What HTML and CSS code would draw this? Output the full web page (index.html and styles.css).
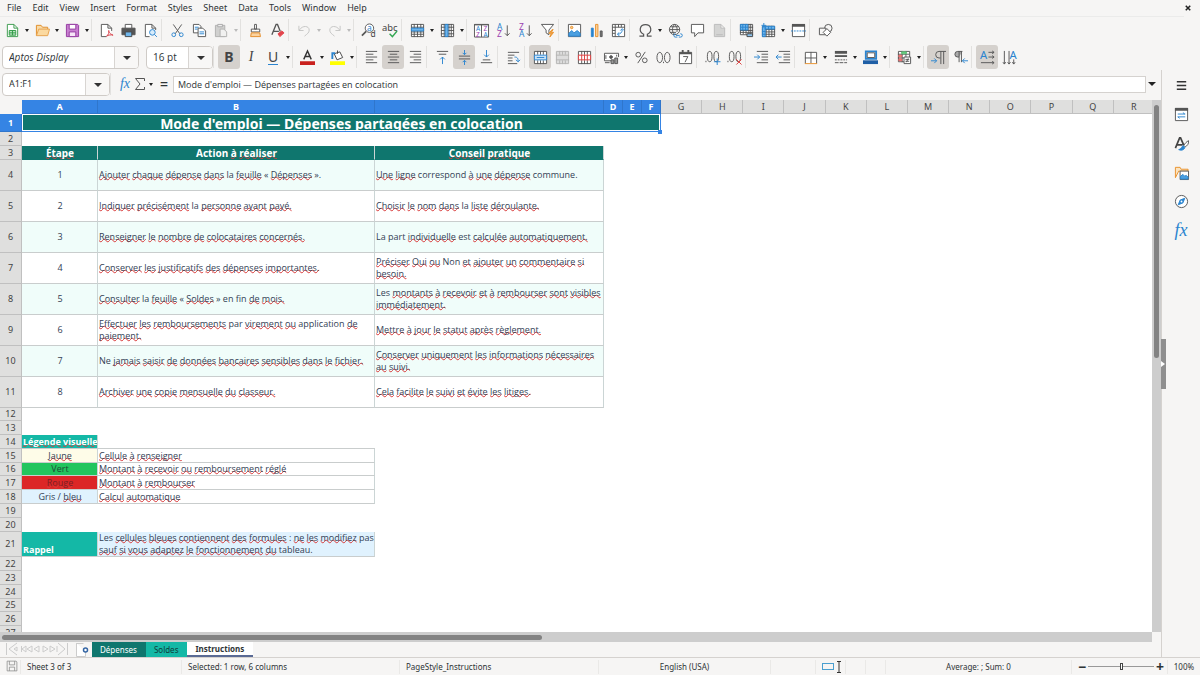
FILE: index.html
```html
<!DOCTYPE html>
<html lang="fr">
<head>
<meta charset="utf-8">
<title>Dépenses partagées en colocation</title>
<link rel="stylesheet" href="styles.css">
</head>
<body>
<header class="menubar">
  <nav class="menus" lang="en">
    <button>File</button><button>Edit</button><button>View</button><button>Insert</button><button>Format</button><button>Styles</button><button>Sheet</button><button>Data</button><button>Tools</button><button>Window</button><button>Help</button>
  </nav>
  <button class="close" aria-label="Close"><svg viewBox="0 0 8 8" width="6" height="6"><path d="M1 1l6 6M7 1l-6 6" stroke="#222" stroke-width="2"/></svg></button>
</header>

<div class="toolbar" role="toolbar" aria-label="Standard">
  <button class="tool" aria-label="New"><svg viewBox="0 0 16 16"><path d="M2.500 1.500h7l4 4v9h-11z" fill="#fff" stroke="#3a9a4c"/><path d="M9.500 1.500v4h4" stroke="#3a9a4c"/><path d="M4.500 8h7v5h-7zM4.500 10.500h7M8 8v5" stroke="#2f9a45" fill="#b8e3bf"/></svg></button><button class="drop" aria-label="New options"></button>
  <button class="tool" aria-label="Open"><svg viewBox="0 0 16 16"><path d="M1.500 13.500v-11h5l1.500 2h5.500v3" fill="#f8dba8" stroke="#e08c26"/><path d="M1.500 13.500l2.500-7h11.500l-2 7z" fill="#fbd9a0" stroke="#e5a04c"/></svg></button><button class="drop" aria-label="Open recent"></button>
  <button class="tool" aria-label="Save"><svg viewBox="0 0 16 16"><path d="M1.500 1.500h12l1 1v12h-13z" fill="#c77fd0" stroke="#93389f"/><path d="M4.500 1.500h7v5h-7z" fill="#fff" stroke="#93389f"/><path d="M4.500 14.500v-5h7v5z" fill="#f7e6f8" stroke="#93389f"/></svg></button><button class="drop" aria-label="Save options"></button>
  <i class="sep"></i>
  <button class="tool" aria-label="Export as PDF"><svg viewBox="0 0 16 16"><path d="M8 14.500H2.500v-13h7l4 4v3M9.500 1.500v4h4" fill="#fff"/><path d="M8 14c2-1 3-4 2.500-6-.8 0-.2 3 4.500 5-2-.7-5-.2-7 1z" stroke="#d9404a"/></svg></button>
  <button class="tool" aria-label="Print"><svg viewBox="0 0 16 16"><path d="M4.500 5.500v-4h7v4" fill="#fff"/><path d="M1 5.500h14v7H1z" fill="#555"/><path d="M4.500 9.500h7v5h-7z" fill="#6fb5ea" stroke="#444"/></svg></button>
  <button class="tool" aria-label="Print preview"><svg viewBox="0 0 16 16"><path d="M7 14.500H2.500v-13h7l4 4v2M9.500 1.500v4h4" fill="#fff"/><circle cx="10" cy="10" r="3" stroke="#2b84cf" fill="#d8ecfb"/><path d="M12.300 12.300l2.500 2.500" stroke="#2b84cf"/></svg></button>
  <i class="sep"></i>
  <button class="tool" aria-label="Cut"><svg viewBox="0 0 16 16"><path d="M3.500 1.500l7 10M12.500 1.500l-7 10"/><circle cx="4" cy="12.500" r="2" stroke="#2b84cf"/><circle cx="12" cy="12.500" r="2" stroke="#2b84cf"/></svg></button>
  <button class="tool" aria-label="Copy"><svg viewBox="0 0 16 16"><path d="M1.500 1.500h6l2 2v7h-8z" fill="#fff"/><path d="M3 4.500h4M3 6.500h3" stroke="#2b84cf"/><path d="M6.500 5.500h5l3 3v6h-8z" fill="#fff"/><path d="M8 9.500h5M8 11.500h5" stroke="#2b84cf"/></svg></button>
  <button class="tool" aria-label="Paste" disabled><svg viewBox="0 0 16 16"><path d="M1.500 2.500h10v12h-10z" fill="#d0d0cf" stroke="#b0b0af"/><path d="M4 1.500h5v2.500H4z" fill="#eee" stroke="#aaa"/><path d="M6.500 6.500h4l3 3v5h-7z" fill="#f1f1f0" stroke="#b0b0af"/></svg></button><button class="drop off" aria-label="Paste options" disabled></button>
  <i class="sep"></i>
  <button class="tool" aria-label="Clone formatting"><svg viewBox="0 0 16 16"><path d="M7 1.500h2v5H7zM3.500 6.500h9v3h-9z" fill="#fff"/><path d="M3.500 10.500h9l.8 4H2.800z" fill="#fbd3a0" stroke="#e38c28"/></svg></button>
  <button class="tool" aria-label="Clear formatting"><svg viewBox="0 0 16 16"><path d="M2 12.500L6.500 1.500h1.500L11 9M3.500 9h6" stroke-width="1.400"/><path d="M8.500 11.500l4-3 2.500 2-4.500 4z" fill="#e2434b" stroke="#e2434b"/></svg></button>
  <i class="sep"></i>
  <button class="tool" aria-label="Undo" disabled><svg viewBox="0 0 16 16"><path d="M2 3v5h5M2.500 7.500C6 2 13 3 13 7.500c0 3-2 4-5 6.500" stroke="#c4c4c3"/></svg></button><button class="drop off" aria-label="Undo list" disabled></button>
  <button class="tool" aria-label="Redo" disabled><svg viewBox="0 0 16 16"><path d="M14 3v5H9M13.500 7.500C10 2 3 3 3 7.500c0 3 2 4 5 6.500" stroke="#c4c4c3"/></svg></button><button class="drop off" aria-label="Redo list" disabled></button>
  <i class="sep"></i>
  <button class="tool" aria-label="Find and replace"><svg viewBox="0 0 16 16"><circle cx="9" cy="5.500" r="4.500" fill="#fff"/><path d="M5.500 9L1 13.500" stroke-width="1.800"/><text x="6.500" y="8" class="g blue t8">a</text><text x="10" y="15" class="g t8">d</text></svg></button>
  <button class="tool" aria-label="Spelling"><svg viewBox="0 0 16 16"><text x="-1" y="8" class="g t10">abc</text><path d="M7 11.500l3 3 5-6" stroke="#35a854" stroke-width="1.500"/></svg></button>
  <i class="sep"></i>
  <button class="tool" aria-label="Row"><svg viewBox="0 0 16 16"><path d="M1.500 1.500h13v13h-13zM1.500 4.500h13M1.500 9.500h13M1.500 12h13M4.500 1v14M8 1v14M11.500 1v14" fill="#fff"/><path d="M1.500 5.500h13v3h-13z" fill="#6db4ea" stroke="#2b84cf"/></svg></button><button class="drop" aria-label="Row options"></button>
  <button class="tool" aria-label="Column"><svg viewBox="0 0 16 16"><path d="M1.500 1.500h13v13h-13zM1 4.500h14M1 8h14M1 11.500h14M4.500 1v14M9.500 1v14M12 1v14" fill="#fff"/><path d="M5.500 1.500h3v13h-3z" fill="#6db4ea" stroke="#2b84cf"/></svg></button><button class="drop" aria-label="Column options"></button>
  <i class="sep"></i>
  <button class="tool" aria-label="Sort"><svg viewBox="0 0 16 16"><path d="M.5 1.500h15v13.500H.500zM8 2v13M0 2h16" fill="#fff"/><text x="2" y="8.500" class="g blue t6">A</text><text x="2" y="14.500" class="g purple t6">Z</text><text x="10" y="8.500" class="g purple t6">Z</text><text x="10" y="14.500" class="g blue t6">A</text></svg></button>
  <button class="tool" aria-label="Sort ascending"><svg viewBox="0 0 16 16"><text x="1" y="7" class="g blue t8">A</text><text x="1" y="15" class="g purple t8">Z</text><path d="M12 2.500v11M9.500 11l2.500 2.500 2.500-2.500"/></svg></button>
  <button class="tool" aria-label="Sort descending"><svg viewBox="0 0 16 16"><text x="1" y="7" class="g purple t8">Z</text><text x="1" y="15" class="g blue t8">A</text><path d="M12 2.500v11M9.500 11l2.500 2.500 2.500-2.500"/></svg></button>
  <button class="tool" aria-label="AutoFilter"><svg viewBox="0 0 16 16"><path d="M1.500 1.500h13l-5 6v5l-3-2v-3z" fill="#fff"/><path d="M13 7l-3.500 4h2.500l-1.500 4 4-5h-2.500l2-3z" fill="#f4a94d" stroke="#e9912c"/></svg></button>
  <i class="sep"></i>
  <button class="tool" aria-label="Image"><svg viewBox="0 0 16 16"><path d="M1.500 1.500h13v13h-13z" fill="#fff"/><path d="M2 14v-3l3-3 2.500 2.500L11 8l3 3v3z" fill="#4a9fe0" stroke="#2b84cf"/><circle cx="5" cy="4.800" r="1.300" stroke="#e9912c" fill="#f9c98a"/></svg></button>
  <button class="tool" aria-label="Chart"><svg viewBox="0 0 16 16"><path d="M2.500 5.500h2v9h-2z" stroke="#2b84cf" fill="#2b84cf"/><path d="M7 1.500h2.500v13H7z" fill="#fbd3a0" stroke="#e9912c"/><path d="M12 8.500h2v6h-2z" fill="#777"/></svg></button>
  <button class="tool" aria-label="Pivot table"><svg viewBox="0 0 16 16"><path d="M1.500 1.500h13v13h-13zM1.500 4.500h13M4.500 1.500v13M8 1.500v3M11 1.500v3M1.500 8h3M1.500 11h3" fill="#fff"/><path d="M7 12c3 0 5-2 5-5M10 8l2-2 2 2M8.500 10L7 12l2 2" stroke="#2b84cf"/></svg></button>
  <i class="sep"></i>
  <button class="tool" aria-label="Special character"><svg viewBox="0 0 16 16"><path d="M1.500 14h4.500v-2C0 9 2 1.800 8 1.800S16 9 10 12v2h4.500" stroke-width="1.300"/></svg></button><button class="drop" aria-label="Recent characters"></button>
  <button class="tool" aria-label="Hyperlink"><svg viewBox="0 0 16 16"><circle cx="7" cy="7" r="5.500"/><path d="M1.500 7h11M2.500 4h9M2.500 10h6M7 1.500C4 5 4 9 7 12.500M7 1.500c3 3 3 5 2.500 8"/><path d="M8 11.500h-.5a1.800 1.800 0 000 3.500H10M13 11.500h.5a1.500 1.500 0 010 3.500h-2M8.500 13.200h4" stroke="#2b84cf"/></svg></button>
  <button class="tool" aria-label="Comment"><svg viewBox="0 0 16 16"><path d="M1.500 1.500h13v9h-6l-3.500 4v-4H1.500z" fill="#fff"/></svg></button>
  <button class="tool" aria-label="Headers and footers" disabled><svg viewBox="0 0 16 16"><path d="M2.500 1.500h7l4 4v9h-11zM9.500 1.500v4h4M4.500 12.500h7" fill="#d4d4d3" stroke="#bbb"/></svg></button>
  <i class="sep"></i>
  <button class="tool" aria-label="Print area"><svg viewBox="0 0 16 16"><path d="M1.500 1.500h13v11h-13zM1 8h14M1 10h14M10.500 1v11M12.500 1v11M4.500 1v11M7.500 1v11M10 4.500h5" fill="#fff"/><path d="M1.500 1.500h8v6h-8zM4 1.500v6M7 1.500v6M1.500 4.500h8" fill="#6db4ea" stroke="#2b84cf"/><path d="M8.500 11.500h6v3h-6z" fill="#8cc4ee" stroke="#444"/></svg></button>
  <button class="tool" aria-label="Freeze rows and columns"><svg viewBox="0 0 16 16"><path d="M1.500 3.500h13v11h-13zM1 7h14M1 9.500h14M1 12h14M5.500 3v12M8.500 3v12M11.500 3v12" fill="#fff"/><path d="M1.500 3.500h3v11h-3zM4.500 3.500h10v3h-10zM8 3.500v3M11 3.500v3M1.500 9h3M1.500 12h3" fill="#6db4ea" stroke="#2b84cf"/><path d="M3 0v5M.5 2.500h5" stroke="#2b84cf"/></svg></button><button class="drop" aria-label="Freeze options"></button>
  <button class="tool" aria-label="Split window"><svg viewBox="0 0 16 16"><path d="M1.500 2.500h13v12h-13z" fill="#fff"/><path d="M1 2.500h14" stroke-width="3"/><path d="M0 8.500h16" stroke="#2b84cf" stroke-dasharray="2 1"/></svg></button>
  <i class="sep"></i>
  <button class="tool" aria-label="Draw functions"><svg viewBox="0 0 16 16"><circle cx="11" cy="5.500" r="4"/><path d="M1.500 5.500h7v7h-7z" fill="#f6f5f4"/><path d="M9.500 6l4 4-4 4-4-4z" fill="#fff"/></svg></button>
</div>

<div class="toolbar formatting" role="toolbar" aria-label="Formatting">
  <span class="combo font"><select aria-label="Font name"><option>Aptos Display</option></select></span>
  <span class="combo size"><select aria-label="Font size"><option>16 pt</option></select></span>
  <i class="sep"></i>
  <button class="tool on" aria-label="Bold"><b class="big">B</b></button>
  <button class="tool" aria-label="Italic"><em class="big serif">I</em></button>
  <button class="tool" aria-label="Underline"><span class="big under">U</span></button><button class="drop" aria-label="Underline options"></button>
  <i class="sep"></i>
  <button class="tool" aria-label="Font color"><svg viewBox="0 0 16 16"><path d="M4 10L8 1l4 9M5.500 7h5" stroke-width="1.500" stroke="#333"/><path d="M0 12h16v4H0z" fill="#c9211e" stroke="none"/></svg></button><button class="drop" aria-label="Font color options"></button>
  <button class="tool" aria-label="Background color"><svg viewBox="0 0 16 16"><path d="M4.500 4l6-2 3 6-6 2.500zM8 4V.500" fill="#fff" stroke="#444"/><path d="M2.500 9.500V3.500h3" stroke="#2b84cf" stroke-width="2"/><path d="M0 12h16v4H0z" fill="#ffff00" stroke="none"/></svg></button><button class="drop" aria-label="Background color options"></button>
  <i class="sep"></i>
  <button class="tool" aria-label="Align left"><svg viewBox="0 0 16 16"><path d="M2 1.500h12M2 4.500h8M2 7.500h12M2 10.500h8M2 13.500h12"/></svg></button>
  <button class="tool on" aria-label="Center"><svg viewBox="0 0 16 16"><path d="M2 1.500h12M4 4.500h8M2 7.500h12M4 10.500h8M2 13.500h12"/></svg></button>
  <button class="tool" aria-label="Align right"><svg viewBox="0 0 16 16"><path d="M2 1.500h12M6 4.500h8M2 7.500h12M6 10.500h8M2 13.500h12"/></svg></button>
  <i class="sep"></i>
  <button class="tool" aria-label="Align top"><svg viewBox="0 0 16 16"><path d="M2 1.500h12M4 4.500h8"/><path d="M8 15V7.500M5.500 10L8 7.500l2.500 2.500" stroke="#2b84cf"/></svg></button>
  <button class="tool on" aria-label="Center vertically"><svg viewBox="0 0 16 16"><path d="M2 6.500h12M2 9.500h12"/><path d="M8 0v5M6 3l2 2 2-2M8 16v-5M6 13l2-2 2 2" stroke="#2b84cf"/></svg></button>
  <button class="tool" aria-label="Align bottom"><svg viewBox="0 0 16 16"><path d="M4 10.500h8M2 13.500h12"/><path d="M8 0v7.500M5.500 5L8 7.500 10.500 5" stroke="#2b84cf"/></svg></button>
  <i class="sep"></i>
  <button class="tool" aria-label="Wrap text"><svg viewBox="0 0 16 16"><path d="M2 2.500h12M2 5.500h7M2 8.500h5M2 11.500h5M2 14.500h10"/><path d="M9 7.500c3 0 4 1 4 5M10.500 10.500l2.500 2 2-2" stroke="#2b84cf"/></svg></button>
  <i class="sep"></i>
  <button class="tool on" aria-label="Merge and center"><svg viewBox="0 0 16 16"><path d="M1.500 1.500h13v13h-13zM5 1v4M8 1v4M11 1v4M5 11v4M8 11v4M11 11v4" fill="#fff"/><path d="M1.500 5.500h13v5h-13zM4 8h8" stroke="#2b84cf" fill="#c8e2f8"/></svg></button>
  <button class="tool" aria-label="Merge cells" disabled><svg viewBox="0 0 16 16"><path d="M1.500 1.500h13v13h-13zM5 1v4M8 1v4M11 1v4M5 11v4M8 11v4M11 11v4M1 5.500h14M1 10.500h14" fill="#ddd" stroke="#b4b4b3"/></svg></button>
  <button class="tool" aria-label="Unmerge cells"><svg viewBox="0 0 16 16"><path d="M1.500 1.500h13v13h-13zM5 1v4M8 1v4M11 1v4M5 11v4M8 11v4M11 11v4" fill="#fff"/><path d="M1.500 5.500h13v5h-13zM5 5v6M8 5v6M11 5v6" stroke="#dc3b3b" fill="#fff"/></svg></button>
  <i class="sep"></i>
  <button class="tool" aria-label="Currency"><svg viewBox="0 0 16 16"><path d="M8 11.500H.5v-8h15v4" fill="#fff"/><circle cx="7.500" cy="7.500" r="1.500" fill="#555"/><path d="M1 13.500h5M2 5.500v4M13.500 5v2"/><path d="M7.500 10.500h3v4h-3zM11.500 8.500h3v6h-3z" fill="#999"/></svg></button><button class="drop" aria-label="Currency options"></button>
  <button class="tool" aria-label="Percent"><svg viewBox="0 0 16 16"><circle cx="4.500" cy="5" r="2.500"/><circle cx="11.500" cy="11" r="2.500"/><path d="M12 2L4 14"/></svg></button>
  <button class="tool" aria-label="Number"><svg viewBox="0 0 16 16"><ellipse cx="4" cy="8" rx="3" ry="5.500"/><ellipse cx="12" cy="8" rx="3" ry="5.500"/><path d="M8 12.500v1.500"/></svg></button>
  <button class="tool" aria-label="Date"><svg viewBox="0 0 16 16"><path d="M1.500 2.500h13v12h-13z" fill="#fff"/><path d="M1.500 3.500h13M5 0v3M11 0v3" stroke-width="2"/><path d="M5.500 7h5L7.500 13"/></svg></button>
  <i class="sep"></i>
  <button class="tool" aria-label="Add decimal place"><svg viewBox="0 0 16 16"><ellipse cx="5" cy="7" rx="2.500" ry="5.500"/><ellipse cx="12" cy="7" rx="2.500" ry="5.500"/><path d="M1 11.500v1.500"/><path d="M13 9v7M9.500 12.500h7" stroke="#2b84cf"/></svg></button>
  <button class="tool" aria-label="Delete decimal place"><svg viewBox="0 0 16 16"><ellipse cx="5" cy="7" rx="2.500" ry="5.500"/><ellipse cx="12" cy="7" rx="2.500" ry="5.500"/><path d="M1 11.500v1.500"/><path d="M10 10l5.500 5.500M15.500 10L10 15.500" stroke="#dc3b3b"/></svg></button>
  <i class="sep"></i>
  <button class="tool" aria-label="Increase indent"><svg viewBox="0 0 16 16"><path d="M3 1.500h12M8 4.500h7M8 7.500h7M8 10.500h7M3 13.500h12"/><path d="M0 7.500h6M3.500 5L6 7.500 3.500 10" stroke="#2b84cf"/></svg></button>
  <button class="tool" aria-label="Decrease indent"><svg viewBox="0 0 16 16"><path d="M3 1.500h12M8 4.500h7M8 7.500h7M8 10.500h7M3 13.500h12"/><path d="M0 7.500h6M2.500 5L0 7.500 2.500 10" stroke="#2b84cf"/></svg></button>
  <i class="sep"></i>
  <button class="tool" aria-label="Borders"><svg viewBox="0 0 16 16"><path d="M2.500 14.500v-12h12v12M8.500 2v12M2 8.500h12" fill="#fff"/><path d="M2 14.500h13" stroke="#e9912c"/></svg></button><button class="drop" aria-label="Border options"></button>
  <button class="tool" aria-label="Border style"><svg viewBox="0 0 16 16"><path d="M2 2.500h13" stroke-width="3"/><path d="M2 6.500h13" stroke-width="2"/><path d="M2 10.500h13" stroke-dasharray="2 1"/><path d="M2 13.500h13" stroke-dasharray="4 1"/></svg></button><button class="drop" aria-label="Border style options"></button>
  <button class="tool" aria-label="Border color"><svg viewBox="0 0 16 16"><path d="M3 1.500h11v8H3z" fill="#fff" stroke="#2b84cf" stroke-width="2"/><path d="M4.500 3h8v5h-8z"/><path d="M0 11h16v4H0z" fill="#1f5fa6" stroke="none"/></svg></button><button class="drop" aria-label="Border color options"></button>
  <i class="sep"></i>
  <button class="tool" aria-label="Conditional formatting"><svg viewBox="0 0 16 16"><path d="M1.500 1.500h12v11h-12zM1 4.500h12M1 8.500h12M5.500 1v12M9.500 1v12" fill="#fff"/><path d="M5 2h5v2H5z" fill="#62c77a" stroke="#62c77a"/><path d="M2 5.500h3v2H2zM2 9.500h3v2H2z" fill="#f28a8a" stroke="#e06060"/><path d="M7.500 7.500h7v7h-7z" fill="#fff"/><path d="M9 10h4M9 12h4M12 9l-2 4"/></svg></button><button class="drop" aria-label="Conditional formatting options"></button>
  <i class="sep"></i>
  <button class="tool on" aria-label="Left to right"><svg viewBox="0 0 16 16"><path d="M16 1.500H8.500a3.500 3.500 0 000 7H10M10.500 1.500V15M13.500 1.500V15"/><path d="M0 11.500h6M3.500 9L6 11.500 3.500 14" stroke="#2b84cf"/></svg></button>
  <button class="tool" aria-label="Right to left"><svg viewBox="0 0 16 16"><path d="M10 1.500H5a3 3 0 000 6h1.500M6.500 1.500V13M9 1.500V13" fill="#aaa"/><path d="M10 11.500h6M12.500 9L10 11.500l2.500 2.500" stroke="#2b84cf"/></svg></button>
  <i class="sep"></i>
  <button class="tool on" aria-label="Horizontal text"><svg viewBox="0 0 16 16"><text x="0" y="9.500" class="g blue t11">A</text><path d="M9 2.500h6M9 7.500h6M1 13.500h14M13 1l2 1.500L13 4M13 6l2 1.500L13 9M13 12l2 1.500-2 1.500"/></svg></button>
  <button class="tool" aria-label="Vertical text"><svg viewBox="0 0 16 16"><text x="8" y="9.500" class="g blue t11">A</text><path d="M2.500 1v14M7.500 1v14M12.500 10v5M1 13l1.500 2L4 13M6 13l1.500 2L9 13M11 13l1.500 2 1.500-2"/></svg></button>
</div>

<div class="work">
<main class="main">
  <div class="formula">
    <span class="combo name"><select aria-label="Name box"><option>A1:F1</option></select></span>
    <i class="sep"></i>
    <button class="fx" aria-label="Function wizard">fx</button>
    <button class="sigma" aria-label="Select function"><svg viewBox="0 0 10 12" width="10" height="12"><path d="M9.500 3V.5h-9L5 6 .5 11.500h9V9"/></svg></button><button class="drop" aria-label="Function list"></button>
    <button class="equals" aria-label="Formula">=</button>
    <input class="line" aria-label="Input line" value="Mode d'emploi — Dépenses partagées en colocation">
    <button class="drop wide" aria-label="Expand formula bar"></button>
  </div>
  <div class="canvas">
    <div class="sheet">
      <table>
        <thead>
          <tr><th class="corner"></th><th class="ca">A</th><th class="cb">B</th><th class="cc">C</th><th class="cd">D</th><th class="cd">E</th><th class="cd">F</th><th>G</th><th>H</th><th>I</th><th>J</th><th>K</th><th>L</th><th>M</th><th>N</th><th>O</th><th>P</th><th>Q</th><th>R</th></tr>
        </thead>
        <tbody>
          <tr class="first"><th class="sel">1</th><td colspan="6" class="title"><div>Mode <u>d'emploi</u> — <u>Dépenses</u> <u>partagées</u> <u>en</u> <u>colocation</u></div></td></tr>
          <tr><th>2</th></tr>
          <tr class="heads"><th>3</th><td><u>Étape</u></td><td>Action <u>à</u> <u>réaliser</u></td><td><u>Conseil</u> <u>pratique</u></td></tr>
          <tr class="step odd"><th>4</th><td>1</td><td><u>Ajouter</u> <u>chaque</u> <u>dépense</u> <u>dans</u> la <u>feuille</u> « <u>Dépenses</u> ».</td><td><u>Une</u> <u>ligne</u> correspond <u>à</u> <u>une</u> <u>dépense</u> commune.</td></tr>
          <tr class="step"><th>5</th><td>2</td><td><u>Indiquer</u> <u>précisément</u> la <u>personne</u> <u>ayant</u> <u>payé.</u></td><td><u>Choisir</u> <u>le</u> <u>nom</u> <u>dans</u> la <u>liste</u> <u>déroulante.</u></td></tr>
          <tr class="step odd"><th>6</th><td>3</td><td><u>Renseigner</u> <u>le</u> <u>nombre</u> <u>de</u> <u>colocataires</u> <u>concernés.</u></td><td>La part <u>individuelle</u> est <u>calculée</u> <u>automatiquement.</u></td></tr>
          <tr class="step"><th>7</th><td>4</td><td><u>Conserver</u> <u>les</u> <u>justificatifs</u> <u>des</u> <u>dépenses</u> <u>importantes.</u></td><td><u>Préciser</u> <u>Oui</u> <u>ou</u> Non <u>et</u> <u>ajouter</u> <u>un</u> <u>commentaire</u> <u>si</u> <u>besoin.</u></td></tr>
          <tr class="step odd"><th>8</th><td>5</td><td><u>Consulter</u> la <u>feuille</u> « <u>Soldes</u> » en fin <u>de</u> <u>mois.</u></td><td>Les <u>montants</u> <u>à</u> <u>recevoir</u> <u>et</u> <u>à</u> <u>rembourser</u> <u>sont</u> <u>visibles</u> <u>immédiatement.</u></td></tr>
          <tr class="step"><th>9</th><td>6</td><td><u>Effectuer</u> <u>les</u> <u>remboursements</u> par <u>virement</u> <u>ou</u> application <u>de</u> <u>paiement.</u></td><td><u>Mettre</u> <u>à</u> <u>jour</u> <u>le</u> <u>statut</u> <u>après</u> <u>règlement.</u></td></tr>
          <tr class="step odd"><th>10</th><td>7</td><td>Ne <u>jamais</u> <u>saisir</u> <u>de</u> <u>données</u> <u>bancaires</u> <u>sensibles</u> <u>dans</u> <u>le</u> <u>fichier.</u></td><td><u>Conserver</u> <u>uniquement</u> <u>les</u> <u>informations</u> <u>nécessaires</u> <u>au</u> <u>suivi.</u></td></tr>
          <tr class="step"><th>11</th><td>8</td><td><u>Archiver</u> <u>une</u> <u>copie</u> <u>mensuelle</u> <u>du</u> <u>classeur.</u></td><td><u>Cela</u> <u>facilite</u> <u>le</u> <u>suivi</u> <u>et</u> <u>évite</u> <u>les</u> <u>litiges.</u></td></tr>
          <tr class="short"><th>12</th></tr>
          <tr><th>13</th></tr>
          <tr class="legend"><th>14</th><td class="teal"><u>Légende</u> <u>visuelle</u></td><td></td></tr>
          <tr class="legend key"><th>15</th><td class="yellow"><u>Jaune</u></td><td><u>Cellule</u> <u>à</u> <u>renseigner</u></td></tr>
          <tr class="legend key short"><th>16</th><td class="green">Vert</td><td><u>Montant</u> <u>à</u> <u>recevoir</u> <u>ou</u> <u>remboursement</u> <u>réglé</u></td></tr>
          <tr class="legend key"><th>17</th><td class="red"><u>Rouge</u></td><td><u>Montant</u> <u>à</u> <u>rembourser</u></td></tr>
          <tr class="legend key"><th>18</th><td class="pale">Gris / <u>bleu</u></td><td><u>Calcul</u> <u>automatique</u></td></tr>
          <tr><th>19</th></tr>
          <tr><th>20</th></tr>
          <tr class="note"><th>21</th><td class="teal">Rappel</td><td class="pale">Les <u>cellules</u> <u>bleues</u> <u>contiennent</u> <u>des</u> <u>formules</u> : <u>ne</u> <u>les</u> <u>modifiez</u> pas <u>sauf</u> <u>si</u> <u>vous</u> <u>adaptez</u> <u>le</u> <u>fonctionnement</u> <u>du</u> tableau.</td></tr>
          <tr><th>22</th></tr>
          <tr><th>23</th></tr>
          <tr><th>24</th></tr>
          <tr class="short"><th>25</th></tr>
          <tr><th>26</th></tr>
          <tr><th>27</th></tr>
        </tbody>
      </table>
    </div>
    <div class="vscroll"><span></span></div>
  </div>
  <div class="hscroll"><span></span></div>
  <footer class="tabs">
    <svg class="nav" viewBox="0 0 64 14" width="64" height="14"><path d="M1.500 1v12M12 1L4 7l8 6M9 7l3-2v4zM21 4l-4 3 4 3zM16.500 4v6M27 4l-5 3 5 3zM34 4l-5 3 5 3zM38 4l5 3-5 3zM45 4l5 3-5 3zM52 4v6M53 1l7 6-7 6M62.500 1v12"/></svg>
    <button class="add" aria-label="Add sheet"><svg viewBox="0 0 14 14" width="14" height="14"><path d="M1.500 0v13.500h9V9M1.500.5h7" fill="#fff" stroke="#ccc"/><circle cx="10.500" cy="7" r="2" fill="#fff" stroke="#3465a4" stroke-width="1.500"/></svg></button>
    <button class="tab t-dep">Dépenses</button><button class="tab t-sol">Soldes</button><button class="tab t-ins">Instructions</button>
  </footer>
</main>
<aside class="sidebar">
  <button class="grip" aria-label="Hide sidebar"></button>
  <button aria-label="Sidebar settings"><svg viewBox="0 0 16 16"><path d="M3 4h10M3 8h10M3 12h10" stroke="#333" stroke-width="1.500"/></svg></button>
  <button aria-label="Properties"><svg viewBox="0 0 16 16"><path d="M1.500 1.500h13v13h-13z" fill="#fff"/><path d="M1 2.500h14" stroke-width="3"/><path d="M4 7.500h8M4 10.500h8M9.500 6l2 1.500M6 12l-2-1.500" stroke="#2b84cf"/></svg></button>
  <button aria-label="Styles"><svg viewBox="0 0 16 16"><path d="M1.500 13L6 2h1l3.500 8M3 9.500h6" stroke-width="1.800" stroke="#444"/><path d="M15.500 5c-2 1-4 3-5 5l1.500 1.500c2-1 4-3 3.500-6.500z" fill="#fff"/><path d="M10 10.500c-2 0-1 3-5 4 3 1.500 6.500 0 6.500-2.500z" fill="#2b84cf" stroke="#2b84cf"/></svg></button>
  <button aria-label="Gallery"><svg viewBox="0 0 16 16"><path d="M1.500 13.500v-11h5l1 2h7.500v2H5l-3.500 7z" fill="#fbe3bf" stroke="#e9912c"/><path d="M6.500 6.500h9v9h-9z" fill="#fff"/><path d="M7 15v-3l2.500-2 2 2 1.500-1 2 2v2z" fill="#4a9fe0" stroke="#2b84cf"/></svg></button>
  <button aria-label="Navigator"><svg viewBox="0 0 16 16"><circle cx="8" cy="8" r="6.500" fill="#fff"/><path d="M11.500 4.500l-2 5-5 2 2-5z" fill="#2b84cf" stroke="#2b84cf"/><circle cx="8" cy="8" r="1" fill="#fff" stroke="none"/></svg></button>
  <button class="bigfx" aria-label="Functions">fx</button>
</aside>
</div>

<div class="status" lang="en">
  <span><svg viewBox="0 0 16 16" width="12" height="12"><path d="M1.500 1.500h12l1 1v12h-13zM4.500 1.500v5h7v-5M4.500 14.500v-5h7v5" stroke="#888"/></svg></span>
  <span>Sheet 3 of 3</span>
  <span>Selected: 1 row, 6 columns</span>
  <span>PageStyle_Instructions</span>
  <span class="mid">English (USA)</span>
  <span></span>
  <span class="mode"><i></i><svg viewBox="0 0 6 12" width="6" height="12"><path d="M1 .5h4M1 11.500h4M3 .5v11" stroke="#333"/></svg></span>
  <span></span>
  <span></span>
  <span class="mid">Average: ; Sum: 0</span>
  <span class="zoom"><button aria-label="Zoom out">−</button><input type="range" min="0" max="100" value="50" aria-label="Zoom"><button aria-label="Zoom in">+</button></span>
  <span class="mid">100%</span>
</div>
</body>
</html>
```

FILE: styles.css
```css
* { box-sizing: border-box; }
body {
  margin: 0;
  height: 100vh;
  display: flex;
  flex-direction: column;
  overflow: hidden;
  background: #f6f5f4;
  color: #2e3436;
  font: 9px/12px "Noto Sans", "Open Sans", sans-serif;
}
button, select, input { font: inherit; color: inherit; margin: 0; }
button { border: 0; padding: 0; background: none; }
svg { display: block; fill: none; stroke: #555; overflow: visible; }

.menubar { display: flex; justify-content: space-between; align-items: center; height: 16px; padding: 0 7px 0 0; }
.menus { display: flex; gap: 11px; padding-left: 7px; }
.close { padding: 2px; }

.toolbar { display: flex; align-items: center; height: 27px; padding-left: 1px; border-top: 1px solid #ebebea; margin-right: 16px; }
.formatting { border-top-color: transparent; margin-right: 0; padding-left: 2px; }
.tool { width: 22px; height: 24px; display: flex; align-items: center; justify-content: center; border-radius: 3px; flex: none; }
.tool svg { width: 15px; height: 15px; }
.tool.on { background: #d5d1cd; }
.drop { width: 8px; height: 24px; flex: none; display: flex; align-items: center; justify-content: center; }
.drop::after { content: ""; border: solid transparent; border-width: 3px 2px 0; border-top-color: #222; }
.drop.off::after { border-top-color: #bbb; }
.drop.wide { width: 12px; }
.drop.wide::after { border-width: 4px 4px 0; }
.sep { width: 5px; height: 22px; flex: none; border-left: 1px solid #e2e1df; }
.drop + .sep { width: 4px; }
.g { stroke: none; fill: #444; }
.g.blue { fill: #2b84cf; }
.g.purple { fill: #9b3fb0; }
.t6 { font-size: 7px; }
.t8 { font-size: 9px; }
.t10 { font-size: 10px; }
.t11 { font-size: 12px; }
.big { font-size: 14px; line-height: 16px; color: #444; }
.serif { font-family: "Liberation Serif", serif; }
.under { line-height: 14px; border-bottom: 1px solid #2b84cf; }

.combo { position: relative; display: flex; height: 23px; flex: none; border: 1px solid #cfcbc7; border-radius: 4px; background: #fff; overflow: hidden; }
.combo select { appearance: none; border: 0; background: none; width: 100%; padding: 0 24px 0 6px; outline: 0; }
.combo::before { content: ""; position: absolute; right: 0; top: 0; width: 23px; height: 100%; background: #f8f7f6; border-left: 1px solid #d8d5d2; pointer-events: none; }
.combo::after { content: ""; position: absolute; right: 7px; top: 9px; border: solid transparent; border-width: 4px 4px 0; border-top-color: #333; pointer-events: none; }
.font { width: 137px; margin-right: 7px; }
.font select { font-style: italic; font-size: 10px; font-family: "Open Sans", sans-serif; }
.size { width: 67px; }
.size select { font-size: 10px; font-family: "Open Sans", sans-serif; }
.name { width: 108px; }

.work { flex: 1; display: flex; min-height: 0; }
.main { flex: 1; display: flex; flex-direction: column; min-width: 0; }
.formula { display: flex; align-items: center; height: 30px; padding: 0 3px 2px 2px; }
.fx { width: 16px; font: italic 14px/16px "Liberation Serif", serif; color: #2b84cf; margin-left: 2px; }
.sigma { width: 14px; display: flex; justify-content: center; }
.equals { width: 18px; font-size: 14px; font-weight: 600; }
.line { flex: 1; min-width: 0; height: 17px; border: 1px solid #d5d2cf; background: #fff; padding: 0 4px; outline: 0; font-family: "Open Sans", sans-serif; }

.canvas { flex: 1; display: flex; min-height: 0; }
.sheet { flex: 1; min-width: 0; overflow: hidden; background: #fff; }
table { table-layout: fixed; width: calc(100% + 3px); border-collapse: separate; border-spacing: 0; }
tr { height: 14px; }
tr.short { height: 13px; }
th, td { padding: 0; overflow: hidden; }
th { font-weight: 400; line-height: 12px; background: #dfdfde; color: #444; border-right: 1px solid #c0c0c0; border-bottom: 1px solid #c0c0c0; }
.corner { width: 22px; background: #f6f5f4; border-color: #f6f5f4; }
.ca { width: 76px; }
.cb { width: 277px; }
.cc { width: 229px; }
.cd { width: 19px; }
.ca, .cb, .cc, .cd, .sel { background: #3584e4; color: #fff; font-weight: 700; border-color: #2f76cc; }
td { line-height: 12px; padding: 0 0 0 1px; color: #334155; border-right: 1px solid #cbd5d5; border-bottom: 1px solid #c9cdcd; font-family: "Open Sans", sans-serif; }
td:nth-child(2) { text-align: center; }
u { text-decoration: underline wavy #d83a3a 1px; text-underline-offset: -2px; text-decoration-skip-ink: none; }
.first { height: 18px; }
.first .title { position: relative; overflow: visible; background: #0f766e; color: #fff; border: solid #3584e4; border-width: 0 1px 1px 0; box-shadow: inset 0 0 0 1px #fff; font: 700 14px/18px "Noto Sans", sans-serif; }
.title div { height: 16px; line-height: 18px; overflow: hidden; }
.title u { text-underline-offset: 1px; }
.title::after { content: ""; position: absolute; right: -2px; bottom: -3px; width: 4px; height: 4px; background: #3584e4; }
.heads td { background: #0f766e; color: #fff; font: 700 10px/12px "Noto Sans", sans-serif; text-align: center; border-bottom-color: #0f766e; }
.step { height: 31px; }
.odd td { background: #f0fdfa; }
.legend td { white-space: nowrap; }
.legend td:nth-child(3) { text-align: left; }
.legend .teal + td { border-right: 0; }
.teal { background: #14b8a6; color: #fff; font-weight: 700; }
td.teal { text-align: left; }
.yellow { background: #fefce8; }
.green { background: #22c55e; color: #1f4a35; }
.red { background: #dc2626; color: #7a1f24; }
.pale { background: #e0f2fe; }
.note { height: 25px; }
.note .teal { vertical-align: bottom; }

.vscroll { width: 9px; background: #cdcdcd; padding: 5px 2px 0; }
.vscroll span { display: block; height: 48%; border-radius: 3px; background: #828282; }
.hscroll { height: 10px; background: #cdcdcd; margin-right: 9px; padding: 3px 2px 2px; }
.hscroll span { display: block; width: 47%; height: 5px; border-radius: 3px; background: #828282; }
.tabs { display: flex; height: 15px; padding-left: 5px; font-size: 8px; }
.nav { stroke: #ccc; }
.add { width: 23px; padding-left: 6px; }
.tab { padding: 0 9px 0 8px; line-height: 14px; }
.t-dep { background: #0f766e; color: #fff; }
.t-sol { background: #14b8a6; color: #0f3d3a; }
.t-ins { background: #fff; font-weight: 700; border-bottom: 2px solid #5a6a94; }

.sidebar { position: relative; width: 39px; border-left: 1px solid #d5d2cf; display: flex; flex-direction: column; align-items: center; gap: 9px; padding-top: 5px; }
.sidebar button { height: 20px; display: flex; align-items: center; }
.sidebar svg { width: 15px; height: 15px; }
.sidebar .bigfx { font: italic 18px/20px "Liberation Serif", serif; color: #2b84cf; }
.sidebar .grip { position: absolute; left: -1px; top: calc(50% - 25px); width: 5px; height: 50px; background: #8f8f8f; }
.grip::after { content: ""; border: solid transparent; border-width: 3px 0 3px 4px; border-left-color: #fff; }

.status { display: grid; grid-template-columns: 20px 161fr 218fr 199fr 172fr 45fr 30px 20px 20px 186fr 96px 33px; height: 18px; align-items: center; border-top: 1px solid #d5d2cf; font-size: 8px; }
.status > span { padding-left: 6px; white-space: nowrap; border-left: 1px solid #eae9e7; height: 14px; line-height: 14px; }
.status > span:first-child { border: 0; }
.status .mid { text-align: center; padding: 0; }
.status .mode, .status .zoom { display: flex; align-items: center; gap: 2px; }
.mode i { width: 12px; height: 7px; border: 1px solid #4a9fd0; }
.zoom button { font-size: 14px; font-weight: 700; width: 8px; }
.zoom input { appearance: none; width: 66px; height: 1px; background: #999; }
.zoom input::-webkit-slider-thumb { appearance: none; width: 3px; height: 7px; background: #fff; border: 1px solid #444; }
```
